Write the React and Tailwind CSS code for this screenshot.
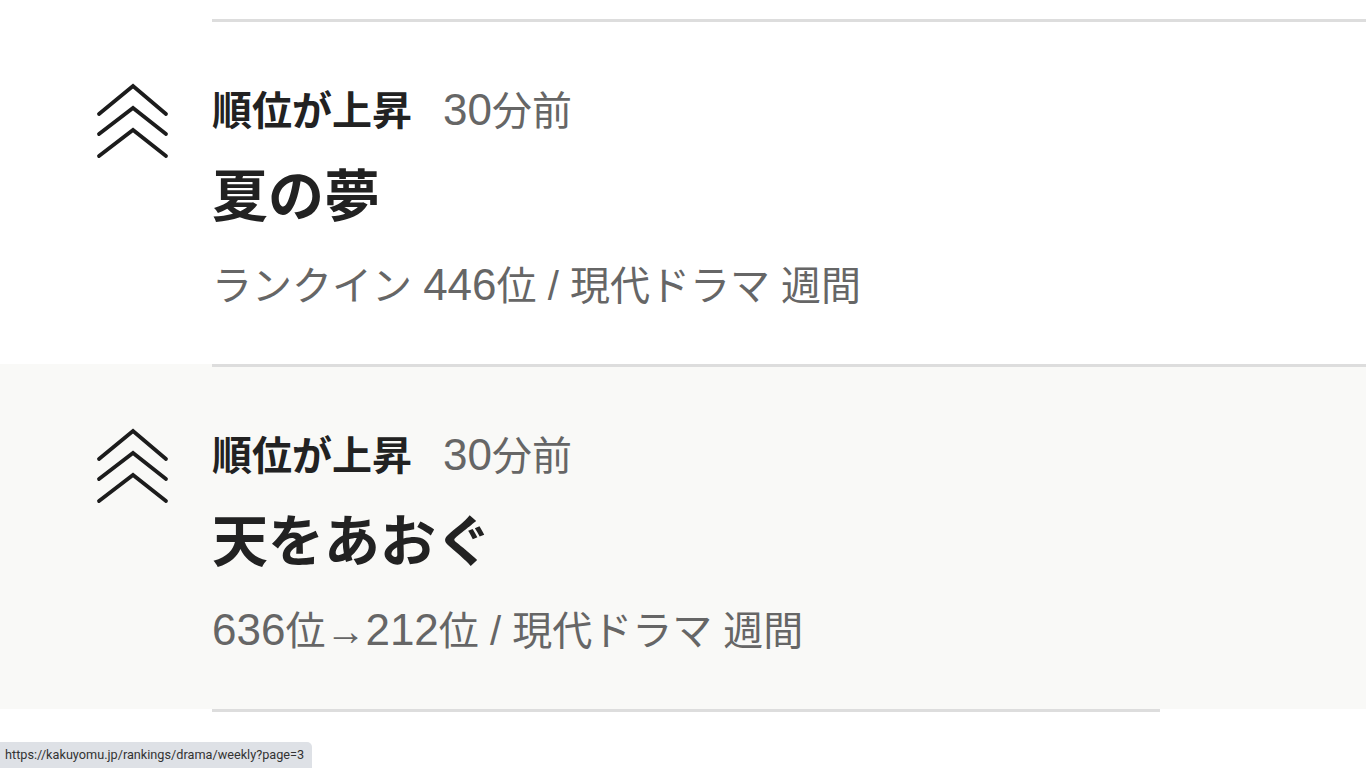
import React from 'react'

const font = { fontFamily: '"Liberation Sans", "Noto Sans CJK JP", sans-serif' }

// numbers render a bit larger than the kana/kanji around them
const Num = ({ children }) => <span className="text-[44px]">{children}</span>

const items = [
  {
    title: '夏の夢',
    meta: <>ランクイン <Num>446</Num>位 / 現代ドラマ 週間</>,
    bg: 'bg-white',
  },
  {
    title: '天をあおぐ',
    meta: <><Num>636</Num>位→<Num>212</Num>位 / 現代ドラマ 週間</>,
    bg: 'bg-[#f9f9f7]',
  },
]

const RiseIcon = () => (
  <svg width="76" height="78" viewBox="0 0 76 78" fill="none" stroke="#1c1c1c" strokeWidth="3.8" strokeLinecap="round" strokeLinejoin="miter">
    <path d="M4 31 L38 3 L71 31" />
    <path d="M4 51 L38 25 L71 51" />
    <path d="M4 73 L38 47 L71 73" />
  </svg>
)

const Item = ({ item }) => (
  <div className={`flex ${item.bg}`}>
    <div className="w-[212px] shrink-0 pt-[64px] pl-[95px]">
      <RiseIcon />
    </div>
    <div className="flex-1 border-t-[3px] border-[#dddddd] pt-[58px] pb-[49px]">
      <div className="flex items-baseline h-[60px] leading-[60px] text-[40px]">
        <span className="font-bold text-[#222]">順位が上昇</span>
        <span className="ml-[31px] text-[#666]"><Num>30</Num>分前</span>
      </div>
      <div className="mt-[17px] h-[80px] leading-[80px] text-[56px] font-bold text-[#222]">
        {item.title}
      </div>
      <div className="mt-[18px] h-[60px] leading-[60px] text-[40px] text-[#666]">
        {item.meta}
      </div>
    </div>
  </div>
)

export default function App() {
  return (
    <div className="relative min-h-screen bg-white overflow-hidden" style={font}>
      <div className="pt-[19px]">
        {items.map((item, i) => (
          <Item key={i} item={item} />
        ))}
        <div className="ml-[212px] w-[948px] h-[3px] bg-[#dddddd]" />
      </div>
      <div
        className="fixed bottom-0 left-0 h-[26px] w-[312px] rounded-tr-[5px] bg-[#dee1e6] pl-[5px] text-[12.7px] leading-[26px] text-[#333]"
        style={{ fontFamily: 'Roboto, "Liberation Sans", sans-serif' }}
      >
        https://kakuyomu.jp/rankings/drama/weekly?page=3
      </div>
    </div>
  )
}
